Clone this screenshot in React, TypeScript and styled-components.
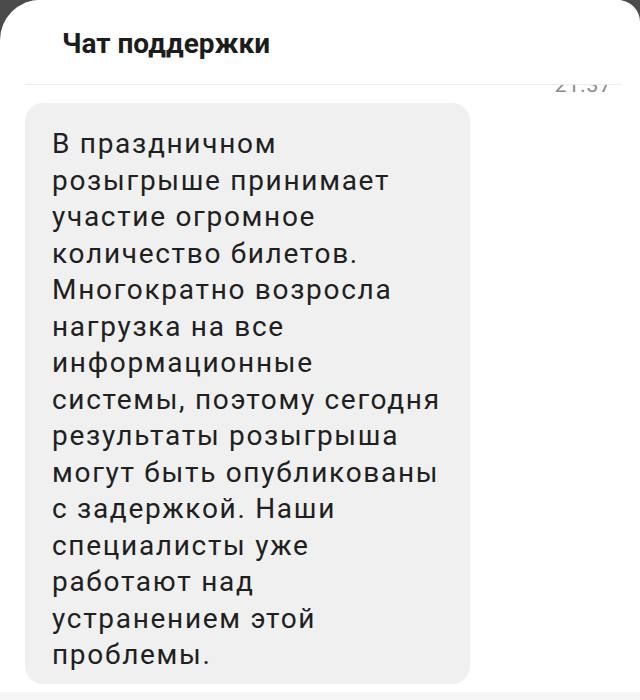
import React from 'react'
import styled, { createGlobalStyle } from 'styled-components'

const GlobalStyle = createGlobalStyle`
  html, body {
    margin: 0;
    padding: 0;
    background: #4b4b4b;
  }
  * {
    box-sizing: border-box;
  }
`

const messageText =
  'В праздничном розыгрыше принимает участие огромное количество билетов. Многократно возросла нагрузка на все информационные системы, поэтому сегодня результаты розыгрыша могут быть опубликованы с задержкой. Наши специалисты уже работают над устранением этой проблемы.'

const App: React.FC = () => {
  return (
    <>
      <GlobalStyle />
      <Screen>
        <Header>
          <Title>Чат поддержки</Title>
        </Header>
        <MessageList>
          <TimeRow>21:37</TimeRow>
          <Bubble>{messageText}</Bubble>
        </MessageList>
        <BottomBar />
      </Screen>
    </>
  )
}

const Screen = styled.div`
  width: 640px;
  height: 700px;
  background: #ffffff;
  border-radius: 40px 22px 0 0;
  display: flex;
  flex-direction: column;
  overflow: hidden;
  font-family: Roboto, 'Noto Sans', sans-serif;
`

const Header = styled.div`
  position: relative;
  z-index: 1;
  height: 85px;
  margin: 0 18px 0 25px;
  padding: 27px 0 0 37px;
  background: #ffffff;
  border-bottom: 1px solid #ececec;
  flex-shrink: 0;
`

const Title = styled.h1`
  margin: 0;
  font-size: 28px;
  line-height: 34px;
  font-weight: 700;
  color: #1c1c1c;
`

const MessageList = styled.div`
  flex: 1;
  overflow: hidden;
  padding: 0 0 0 25px;
  display: flex;
  flex-direction: column;
  align-items: flex-start;
`

const TimeRow = styled.div`
  align-self: flex-end;
  margin: -12px 28px 0 0;
  font-size: 21px;
  line-height: 24px;
  letter-spacing: 1px;
  color: #8a8a8a;
  height: 24px;
`

const Bubble = styled.div`
  margin-top: 6px;
  max-width: 445px;
  padding: 23px 26px 10px 27px;
  background: #f0f0f0;
  border-radius: 18px;
  font-size: 28px;
  line-height: 36.5px;
  letter-spacing: 1.7px;
  color: #202020;
`

const BottomBar = styled.div`
  height: 8px;
  flex-shrink: 0;
  background: #f6f6f6;
`

export default App
